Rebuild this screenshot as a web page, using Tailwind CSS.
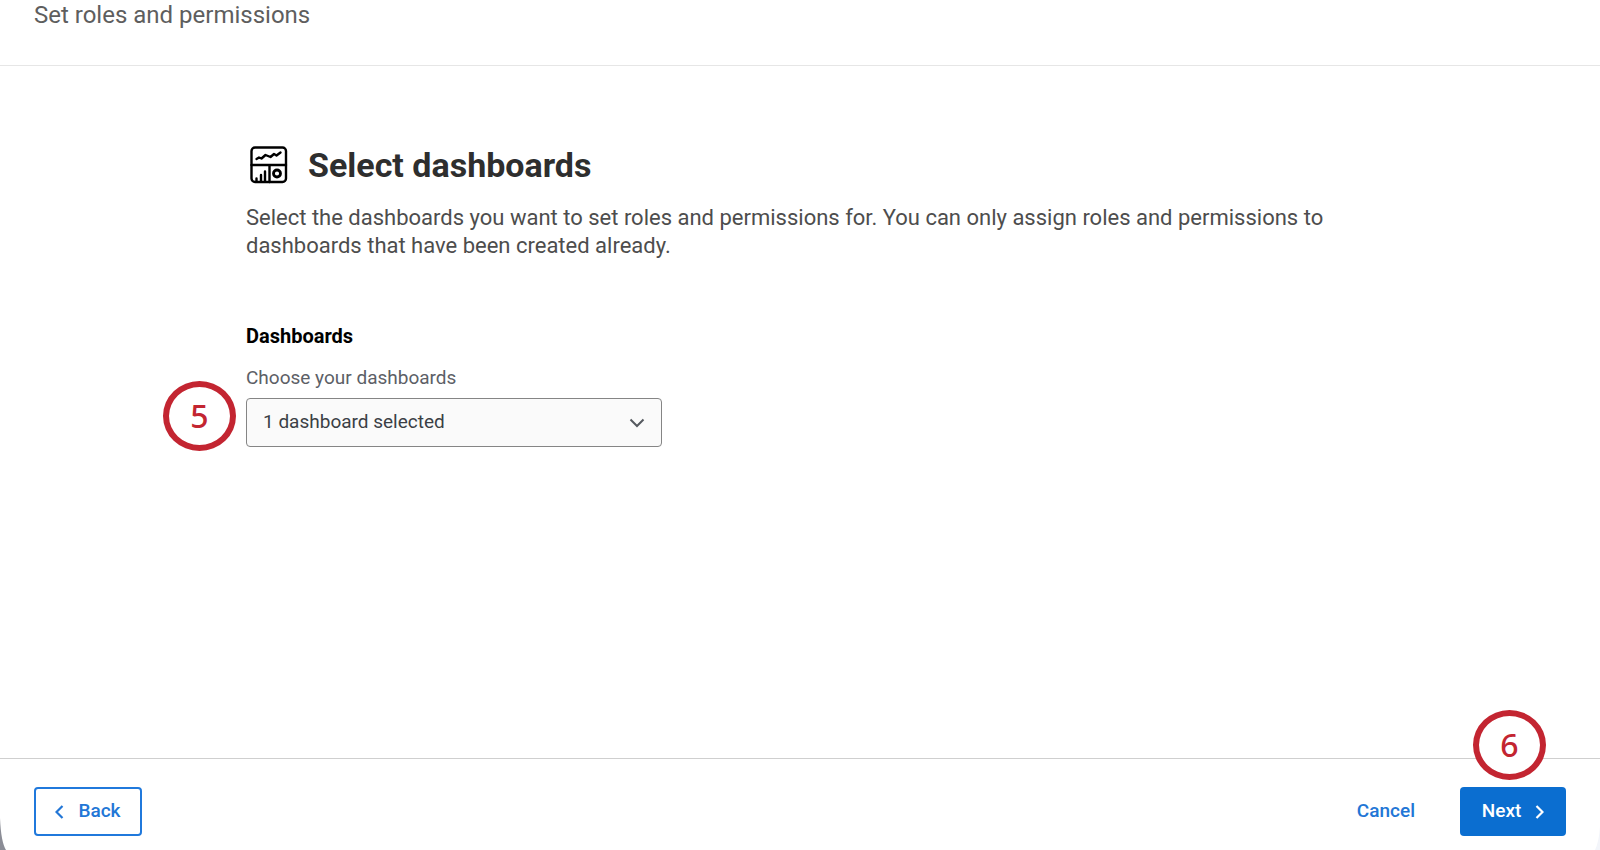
<!DOCTYPE html>
<html lang="en">

<head>
    <meta charset="UTF-8">
    <meta name="viewport" content="width=device-width, initial-scale=1.0">
    <title>Set roles and permissions</title>
    <script src="https://cdn.jsdelivr.net/npm/@tailwindcss/browser@4"></script>
</head>

<body class="relative flex min-h-screen flex-col overflow-hidden bg-white font-['Roboto',sans-serif] text-[19px] antialiased">
    <!-- Header -->
    <header class="border-b border-[#e6e6e6] px-[34px] pt-px pb-9">
        <p class="text-2xl leading-7 text-[#5e5e5e]">Set roles and permissions</p>
    </header>

    <!-- Step content -->
    <main class="mx-auto w-full max-w-[1108px] flex-1 pt-20">
        <div class="flex items-center gap-5 pl-1">
            <svg class="size-[38px]" viewBox="0 0 38 38" fill="none" stroke="#000" stroke-width="2.4" stroke-linecap="round" stroke-linejoin="round" aria-hidden="true">
                <rect x="1.500" y="1.500" width="34.500" height="34.500" rx="3.500" />
                <path d="M1.500 19h34.500M19.500 19v17" />
                <path d="M6.500 13l2.500-1.500 2.500 1 4-3.500 5 2 3.500-3 2.500 1.500 4-3" />
                <path d="M6.500 35v-2.500M11 35v-6M15 35v-9.500" />
                <circle cx="27" cy="27.500" r="3.500" stroke-width="2.800" />
            </svg>
            <h1 class="text-[34px] leading-9 font-bold text-[#2e2e2e]">Select dashboards</h1>
        </div>
        <p class="mt-5 text-[22px] leading-7 text-[#4d4d4d]">
            Select the dashboards you want to set roles and permissions for. You can only assign roles and permissions to
            dashboards that have been created already.
        </p>

        <h2 class="mt-[62px] text-xl leading-7 font-bold text-black">Dashboards</h2>
        <label for="dashboards" class="mt-[14px] block leading-7 text-[#5c6066]">Choose your dashboards</label>
        <div class="relative mt-[6px] w-[416px]">
            <select id="dashboards"
                class="h-[49px] w-full appearance-none rounded-[4px] border border-[#858585] bg-[#fafafa] px-4 text-[#3b3f45] focus:outline-none focus:ring-2 focus:ring-[#0b6ed0]">
                <option>1 dashboard selected</option>
            </select>
            <svg class="pointer-events-none absolute top-5 right-[17px] h-[10px] w-4" viewBox="0 0 16 10" fill="none" stroke="#55595f" stroke-width="2" aria-hidden="true">
                <path d="M1.500 1.500L8 8l6.500-6.500" />
            </svg>
            <span class="absolute -top-[17px] -left-[83px] flex h-[70px] w-[73px] items-center justify-center rounded-[50%] border-[6px] border-[#c32531] bg-white font-['Noto_Sans',sans-serif] text-[32px] font-medium text-[#c32531]">5</span>
        </div>
    </main>

    <!-- Footer actions -->
    <footer class="flex items-center border-t border-[#cfcfcf] px-[34px] pt-7 pb-[14px]">
        <button type="button"
            class="flex h-[49px] w-[108px] items-center justify-center gap-[14px] rounded-[4px] border-2 border-[#2079dc] bg-white font-medium text-[#2276d6]">
            <svg class="h-[14px] w-[9px]" viewBox="0 0 9 14" fill="none" stroke="currentColor" stroke-width="2.2" aria-hidden="true">
                <path d="M7.500 1L1.500 7l6 6" />
            </svg>
            Back
        </button>
        <button type="button" class="ml-auto h-[49px] px-[45px] font-medium text-[#2276d6]">Cancel</button>
        <div class="relative">
            <button type="button"
                class="flex h-[49px] w-[106px] items-center justify-center gap-[14px] rounded-[4px] bg-[#0b6ed0] font-medium text-white">
                Next
                <svg class="h-[14px] w-[9px]" viewBox="0 0 9 14" fill="none" stroke="currentColor" stroke-width="2.2" aria-hidden="true">
                    <path d="M1.500 1l6 6-6 6" />
                </svg>
            </button>
            <span class="absolute -top-[77px] left-[13px] flex h-[70px] w-[73px] items-center justify-center rounded-[50%] border-[6px] border-[#c32531] bg-white font-['Noto_Sans',sans-serif] text-[32px] font-medium text-[#c32531]">6</span>
        </div>
    </footer>

    <!-- Window corners -->
    <svg class="absolute bottom-0 left-0 h-8 w-[6px]" viewBox="0 0 6 32" fill="#8b8d96" aria-hidden="true">
        <path d="M0 0Q1 24 6 32H0z" />
    </svg>
    <svg class="absolute right-0 bottom-0 h-6 w-[5px]" viewBox="0 0 5 24" fill="#f3f5fa" aria-hidden="true">
        <path d="M5 0Q4 16 0 24h5z" />
    </svg>
</body>

</html>
